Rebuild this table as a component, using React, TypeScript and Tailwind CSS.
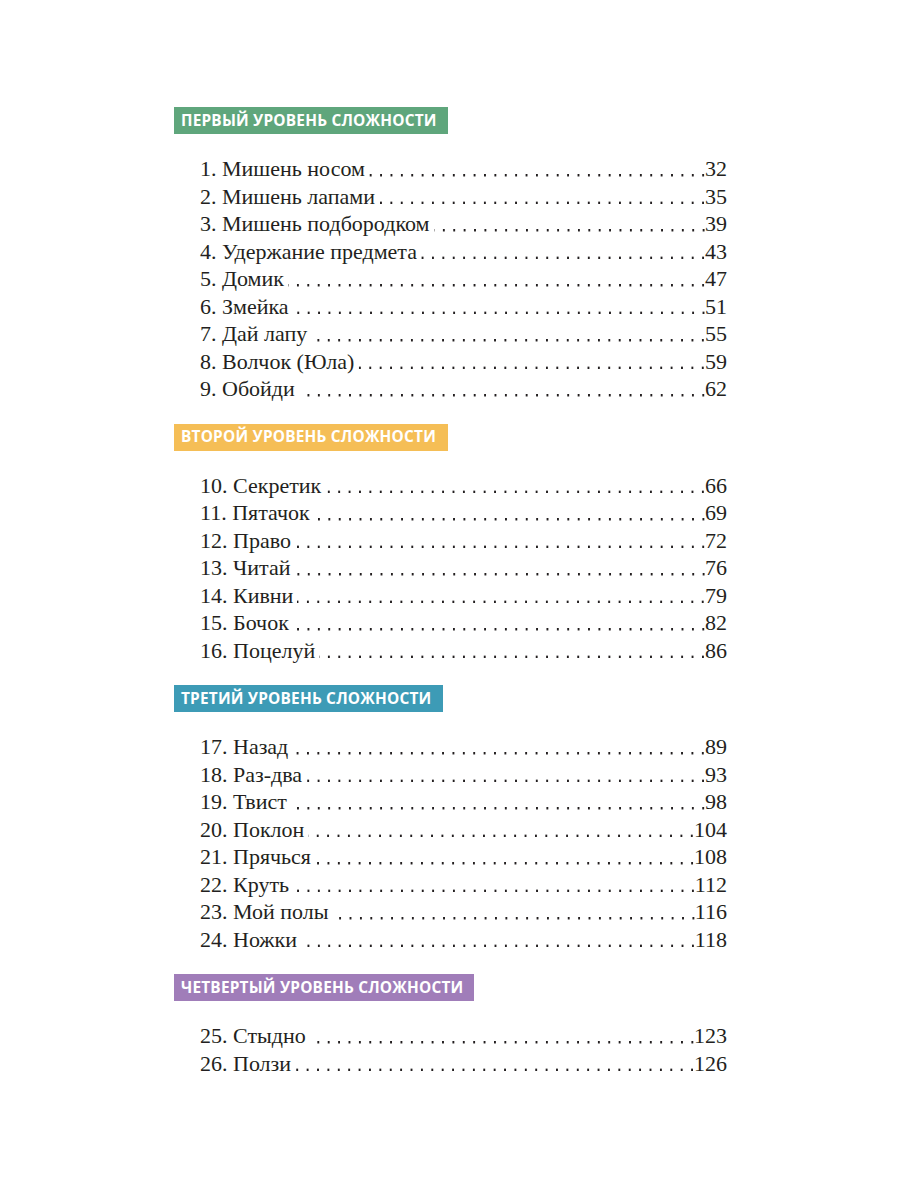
import * as React from "react";

type Entry = { n: number; title: string; page: number };
type Section = { label: string; bar: string; width: string; items: Entry[] };

const sections: Section[] = [
  {
    label: "Первый уровень сложности",
    bar: "bg-[#5fa67c]",
    width: "w-[274px]",
    items: [
      { n: 1, title: "Мишень носом", page: 32 },
      { n: 2, title: "Мишень лапами", page: 35 },
      { n: 3, title: "Мишень подбородком", page: 39 },
      { n: 4, title: "Удержание предмета", page: 43 },
      { n: 5, title: "Домик", page: 47 },
      { n: 6, title: "Змейка", page: 51 },
      { n: 7, title: "Дай лапу", page: 55 },
      { n: 8, title: "Волчок (Юла)", page: 59 },
      { n: 9, title: "Обойди", page: 62 },
    ],
  },
  {
    label: "Второй уровень сложности",
    bar: "bg-[#f5be56]",
    width: "w-[274px]",
    items: [
      { n: 10, title: "Секретик", page: 66 },
      { n: 11, title: "Пятачок", page: 69 },
      { n: 12, title: "Право", page: 72 },
      { n: 13, title: "Читай", page: 76 },
      { n: 14, title: "Кивни", page: 79 },
      { n: 15, title: "Бочок", page: 82 },
      { n: 16, title: "Поцелуй", page: 86 },
    ],
  },
  {
    label: "Третий уровень сложности",
    bar: "bg-[#3d9bb6]",
    width: "w-[269px]",
    items: [
      { n: 17, title: "Назад", page: 89 },
      { n: 18, title: "Раз-два", page: 93 },
      { n: 19, title: "Твист", page: 98 },
      { n: 20, title: "Поклон", page: 104 },
      { n: 21, title: "Прячься", page: 108 },
      { n: 22, title: "Круть", page: 112 },
      { n: 23, title: "Мой полы", page: 116 },
      { n: 24, title: "Ножки", page: 118 },
    ],
  },
  {
    label: "Четвертый уровень сложности",
    bar: "bg-[#a07db9]",
    width: "w-[300px]",
    items: [
      { n: 25, title: "Стыдно", page: 123 },
      { n: 26, title: "Ползи", page: 126 },
    ],
  },
];

function Row({ e }: { e: Entry }) {
  return (
    <div className="flex h-[27.5px] whitespace-nowrap leading-[27.5px]">
      <span>
        {e.n}. {e.title}
      </span>
      {/* leader dots, aligned to the page number */}
      <span className="ml-[4px] min-w-0 flex-1 bg-[radial-gradient(circle_at_8.5px_20px,#231f20_1px,transparent_1.4px)] bg-[length:10.4px_27.5px] bg-right bg-repeat-x" />
      <span>{e.page}</span>
    </div>
  );
}

export default function App() {
  return (
    <div className="min-h-[1200px] w-[900px] bg-white pl-[174px] pt-[107px] text-[#231f20]">
      {sections.map((s) => (
        <section key={s.label} className="mb-[21px]">
          <div className={`${s.width} ${s.bar} flex h-[27px] items-center pl-[7px] text-white`}>
            <span className="[font-family:'Open_Sans',sans-serif] text-[15.4px] font-bold uppercase tracking-[0.2px]">
              {s.label}
            </span>
          </div>
          <div className="mt-[21px] w-[553px] pl-[26px]">
            <div className="[font-family:'Liberation_Serif',serif] text-[22px]">
              {s.items.map((e) => (
                <Row key={e.n} e={e} />
              ))}
            </div>
          </div>
        </section>
      ))}
    </div>
  );
}
